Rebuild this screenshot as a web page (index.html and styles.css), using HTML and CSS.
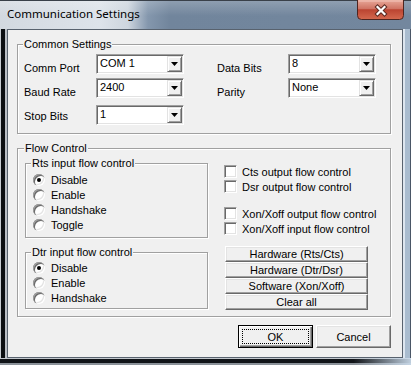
FILE: index.html
```html
<!DOCTYPE html>
<html lang="en">
<head>
  <meta charset="UTF-8">
  <title>Communication Settings</title>
  <link rel="stylesheet" href="styles.css">
</head>
<body>
  <div class="window">
    <div class="titlebar">
      <span class="title">Communication Settings</span>
      <div class="close-btn" title="Close">
        <svg width="47" height="20" viewBox="0 0 47 20">
          <defs>
            <linearGradient id="closeGrad" x1="0" y1="0" x2="0" y2="1">
              <stop offset="0" stop-color="#e8a899"/>
              <stop offset="0.45" stop-color="#cf7363"/>
              <stop offset="0.5" stop-color="#bb4431"/>
              <stop offset="1" stop-color="#d4694f"/>
            </linearGradient>
          </defs>
          <path d="M0.5 0 V15.5 Q0.5 19.5 4.5 19.5 H42.5 Q46.5 19.5 46.5 15.5 V0" fill="url(#closeGrad)" stroke="#4e2520"/>
          <path d="M1.5 1 H45.5" stroke="#f3c6bb" stroke-width="1"/>
          <path d="M20.5 7 L27.5 14 M27.5 7 L20.5 14" stroke="#5b2a22" stroke-width="4.2" stroke-linecap="square"/>
          <path d="M20.5 7 L27.5 14 M27.5 7 L20.5 14" stroke="#ffffff" stroke-width="2.2" stroke-linecap="square"/>
        </svg>
      </div>
    </div>

    <div class="frame">
      <div class="client">

        <fieldset class="group common">
          <legend>Common Settings</legend>
          <div class="common-cols">
            <div class="col col-left">
              <div class="field">
                <span class="field-label">Comm Port</span>
                <div class="combo"><span class="combo-value">COM 1</span><span class="combo-btn"></span></div>
              </div>
              <div class="field">
                <span class="field-label">Baud Rate</span>
                <div class="combo"><span class="combo-value">2400</span><span class="combo-btn"></span></div>
              </div>
              <div class="field field-low">
                <span class="field-label">Stop Bits</span>
                <div class="combo"><span class="combo-value">1</span><span class="combo-btn"></span></div>
              </div>
            </div>
            <div class="col col-right">
              <div class="field">
                <span class="field-label">Data Bits</span>
                <div class="combo"><span class="combo-value">8</span><span class="combo-btn"></span></div>
              </div>
              <div class="field">
                <span class="field-label">Parity</span>
                <div class="combo"><span class="combo-value">None</span><span class="combo-btn"></span></div>
              </div>
            </div>
          </div>
        </fieldset>

        <fieldset class="group flow">
          <legend>Flow Control</legend>
          <div class="flow-cols">
            <div class="flow-left">
              <fieldset class="group sub rts">
                <legend>Rts input flow control</legend>
                <div class="radio-row"><span class="radio checked"></span>Disable</div>
                <div class="radio-row"><span class="radio"></span>Enable</div>
                <div class="radio-row"><span class="radio"></span>Handshake</div>
                <div class="radio-row"><span class="radio"></span>Toggle</div>
              </fieldset>
              <fieldset class="group sub dtr">
                <legend>Dtr input flow control</legend>
                <div class="radio-row"><span class="radio checked"></span>Disable</div>
                <div class="radio-row"><span class="radio"></span>Enable</div>
                <div class="radio-row"><span class="radio"></span>Handshake</div>
              </fieldset>
            </div>

            <div class="flow-right">
              <div class="check-row first"><span class="check"></span>Cts output flow control</div>
              <div class="check-row"><span class="check"></span>Dsr output flow control</div>
              <div class="check-row spaced"><span class="check"></span>Xon/Xoff output flow control</div>
              <div class="check-row"><span class="check"></span>Xon/Xoff input flow control</div>

              <div class="preset-buttons">
                <button class="btn preset">Hardware (Rts/Cts)</button>
                <button class="btn preset">Hardware (Dtr/Dsr)</button>
                <button class="btn preset">Software (Xon/Xoff)</button>
                <button class="btn preset">Clear all</button>
              </div>
            </div>
          </div>
        </fieldset>

        <div class="dialog-buttons">
          <button class="btn dialog-btn default"><span class="focus">OK</span></button>
          <button class="btn dialog-btn">Cancel</button>
        </div>

      </div>
    </div>
  </div>
</body>
</html>
```

FILE: styles.css
```css
* {
  box-sizing: border-box;
}

body {
  margin: 0;
  width: 411px;
  height: 365px;
  overflow: hidden;
  background-color: #1b1f24;
  font-family: "Liberation Sans", Arial, sans-serif;
  font-size: 11px;
  color: #000;
}

/* Window frame */
.window {
  display: flex;
  flex-direction: column;
  height: 365px;
}

.titlebar {
  display: flex;
  align-items: flex-start;
  height: 29px;
  padding-left: 7px;
  background:
    linear-gradient(to bottom, rgba(255, 255, 255, 0.22), rgba(255, 255, 255, 0) 55%),
    linear-gradient(to right, #d3d9e0 0, #dde3ea 100px, #cdd5de 128px, #8497ad 148px, #71859c 170px, #73879e 100%);
  box-shadow: inset 0 1px 0 #394049;
}

.title {
  margin-top: 6px;
  font-family: "Noto Sans", sans-serif;
  font-size: 11.5px;
  line-height: 16px;
}

.close-btn {
  margin-left: auto;
  margin-right: 7px;
  width: 47px;
  height: 20px;
}

.close-btn svg {
  display: block;
}

.frame {
  flex: 1;
  display: flex;
  padding: 0 8px 7px 7px;
  background:
    linear-gradient(to right, rgba(190, 210, 230, 0) 0, rgba(190, 210, 230, 0) 86%, rgba(200, 216, 232, 0.95) 100%) left bottom / 100% 7px no-repeat,
    linear-gradient(to bottom, #c2c7cd 0 1px, #111418 1px 5px, #8b9299 5px 7px) left bottom / 100% 7px no-repeat,
    linear-gradient(to right, #c8cdd2 0 1px, #0c0f12 1px 5px, #b9bec4 5px 7px) left top / 7px 100% no-repeat,
    linear-gradient(to right, #dde6ef 0 2px, #a9bccf 2px 7px, #4a5666 7px 8px) right top / 8px 100% no-repeat;
}

.client {
  flex: 1;
  border: 1px solid #58626e;
  background-color: #f0f0f0;
}

/* Group boxes */
.group {
  margin: 0;
  border: 1px solid #a0a0a0;
  box-shadow: 1px 1px 0 #fff, inset 1px 1px 0 #fff;
}

.group legend {
  margin-left: -1px;
  padding: 0 1px;
  line-height: 13px;
  background-color: #f0f0f0;
}

.common {
  margin: 8px 11px 0 9px;
  padding: 3px 6px 7px 6px;
}

.common-cols {
  display: flex;
  gap: 33px;
}

.field {
  display: flex;
  height: 24px;
}

.field-label {
  padding-top: 8px;
  line-height: 13px;
}

.col-left .field-label {
  width: 72px;
}

.col-right .field-label {
  width: 71px;
}

.field-low .combo {
  margin-top: 3px;
}

/* Combo boxes */
.combo {
  display: flex;
  width: 88px;
  height: 20px;
  padding: 1px;
  background-color: #fff;
  border: 1px solid;
  border-color: #a0a0a0 #fff #fff #a0a0a0;
  box-shadow: inset 1px 1px 0 #696969, inset -1px -1px 0 #e3e3e3;
}

.combo-value {
  flex: 1;
  padding-left: 2px;
  line-height: 14px;
}

.combo-btn {
  display: flex;
  align-items: center;
  justify-content: center;
  width: 15px;
  height: 16px;
  background-color: #f0f0f0;
  border: 1px solid;
  border-color: #e3e3e3 #696969 #696969 #e3e3e3;
  box-shadow: inset 1px 1px 0 #fff, inset -1px -1px 0 #a0a0a0;
}

.combo-btn::after {
  content: "";
  width: 7px;
  height: 4px;
  background-color: #000;
  clip-path: polygon(0 0, 100% 0, 50% 100%);
}

/* Flow control */
.flow {
  margin: 8px 11px 0 9px;
  padding: 2px 7px 6px 7px;
}

.flow-cols {
  display: flex;
  gap: 16px;
  align-items: flex-start;
}

.flow-left {
  width: 183px;
}

.sub legend {
  margin-left: -2px;
}

.rts {
  padding: 2px 6px 5px 7px;
}

.dtr {
  margin-top: 8px;
  padding: 1px 6px 3px 7px;
}

.radio-row {
  display: flex;
  align-items: center;
  gap: 6px;
  height: 15px;
}

.radio {
  display: flex;
  align-items: center;
  justify-content: center;
  width: 12px;
  height: 12px;
  border-radius: 50%;
  background-color: #fff;
  box-shadow:
    inset 1px 1px 0 #a0a0a0,
    inset 2px 2px 0 #696969,
    inset -1px -1px 0 #fff,
    inset -2px -2px 0 #e3e3e3;
}

.radio.checked::after {
  content: "";
  width: 4px;
  height: 4px;
  border-radius: 50%;
  background-color: #000;
}

.check-row {
  display: flex;
  align-items: center;
  gap: 5px;
  height: 15px;
}

.check-row.first {
  margin-top: 7px;
}

.check-row.spaced {
  margin-top: 12px;
}

.check {
  width: 13px;
  height: 13px;
  background-color: #fff;
  border: 1px solid;
  border-color: #a0a0a0 #fff #fff #a0a0a0;
  box-shadow: inset 1px 1px 0 #696969, inset -1px -1px 0 #e3e3e3;
}

/* Buttons */
.btn {
  display: flex;
  align-items: center;
  justify-content: center;
  margin: 0;
  padding: 0;
  font-family: "Liberation Sans", Arial, sans-serif;
  font-size: 11px;
  color: #000;
  background-color: #f0f0f0;
  border: 1px solid;
  border-color: #fff #696969 #696969 #fff;
  box-shadow: inset -1px -1px 0 #a0a0a0, inset 1px 1px 0 #e3e3e3;
}

.preset-buttons {
  display: flex;
  flex-direction: column;
  margin: 10px 0 0 1px;
  width: 143px;
}

.preset {
  height: 16px;
  width: 100%;
}

.dialog-buttons {
  display: flex;
  justify-content: flex-end;
  gap: 3px;
  margin-top: 8px;
  padding-right: 11px;
}

.dialog-btn {
  width: 75px;
  height: 23px;
}

.dialog-btn.default {
  padding: 3px;
  border: 1px solid #000;
  box-shadow:
    inset 1px 1px 0 #fff,
    inset -1px -1px 0 #696969,
    inset -2px -2px 0 #a0a0a0;
}

.focus {
  display: flex;
  align-items: center;
  justify-content: center;
  flex: 1;
  align-self: stretch;
  border: 1px dotted #000;
}
```
